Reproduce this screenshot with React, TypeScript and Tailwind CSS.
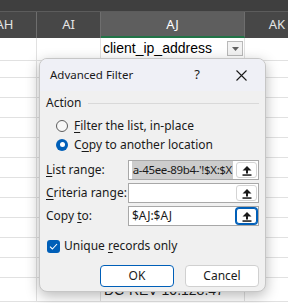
import React from 'react'

function Underlined({ text, at }: { text: string; at: number }) {
  return (
    <>
      {text.slice(0, at)}
      <span className="underline underline-offset-[2px]">{text[at]}</span>
      {text.slice(at + 1)}
    </>
  )
}

function CollapseButton({ focused }: { focused?: boolean }) {
  return (
    <div
      className={
        'flex h-[16px] w-[21px] shrink-0 items-center justify-center rounded-[3px] bg-white ' +
        (focused ? 'border border-[#005fb8] ring-1 ring-[#005fb8]' : 'border border-[#d4d4d4]')
      }
    >
      <svg width="10" height="11" viewBox="0 0 10 11">
        <path d="M5 1 L9.5 5.5 L6 5.5 L6 8.5 L4 8.5 L4 5.5 L0.5 5.5 Z" fill="#1a1a1a" />
        <rect x="0.5" y="9.3" width="9" height="1.5" fill="#1a1a1a" />
      </svg>
    </div>
  )
}

function RangeRow({
  label,
  at,
  value,
  selected,
  focused,
}: {
  label: string
  at: number
  value?: string
  selected?: boolean
  focused?: boolean
}) {
  return (
    <div className="flex h-[20px] items-center">
      <div className="w-[82px] shrink-0 text-[#1a1a1a]">
        <Underlined text={label} at={at} />
      </div>
      <div className="flex h-[20px] min-w-0 flex-1 items-center border border-[#a8a8a8] bg-white pl-[2px] pr-[1px]">
        <div
          className={
            'flex min-w-0 flex-1 overflow-hidden whitespace-nowrap pr-[3px] ' +
            (selected ? 'justify-end' : 'justify-start')
          }
        >
          {value && (
            <span
              className={
                selected
                  ? 'shrink-0 bg-[#cccccc] px-[1px] text-[11.5px] tracking-[-0.35px]'
                  : 'shrink-0 px-[1px]'
              }
            >
              {value}
            </span>
          )}
        </div>
        <CollapseButton focused={focused} />
      </div>
    </div>
  )
}

export default function App() {
  const rows = Array.from({ length: 12 })

  return (
    <div className="relative h-[303px] w-[288px] overflow-hidden bg-white font-['Noto_Sans',sans-serif]">
      <div className="h-[12px] border-b border-[#5c5c5c] bg-[#3f3f3f]" />

      <div className="-ml-[27px] grid h-[26px] grid-cols-[64px_64px_144px_64px] bg-[#474747] text-[13px] text-[#e4e4e4]">
        <div className="flex items-center justify-center border-r border-[#6e6e6e]">AH</div>
        <div className="flex items-center justify-center border-r border-[#6e6e6e]">AI</div>
        <div className="flex items-center justify-center border-b-2 border-r border-b-[#217346] border-r-[#6e6e6e] bg-[#5e5e5e] pt-[2px] text-white">
          AJ
        </div>
        <div className="flex items-center justify-center">AK</div>
      </div>

      <div className="-ml-[27px] grid h-[20px] grid-cols-[64px_64px_144px_64px]">
        <div className="border-b border-r border-[#e1e1e1]" />
        <div className="border-b border-r border-[#e1e1e1]" />
        <div className="flex items-center border-b-2 border-r border-b-[#217346] border-r-[#e1e1e1] pl-[2px] pr-[1px]">
          <span className="flex-1 font-['Liberation_Sans',sans-serif] text-[14px] text-black">client_ip_address</span>
          <div className="flex h-[15px] w-[16px] items-center justify-center border border-[#b9b9b9] bg-[#f3f3f3]">
            <svg width="7" height="4" viewBox="0 0 7 4">
              <path d="M0 0 L7 0 L3.5 4 Z" fill="#616161" />
            </svg>
          </div>
        </div>
        <div className="border-b border-[#e1e1e1]" />
      </div>

      {rows.map((_, i) => (
        <div key={i} className="-ml-[27px] grid h-[20px] grid-cols-[64px_64px_144px_64px]">
          <div className="border-b border-r border-[#e1e1e1]" />
          <div className="border-b border-r border-[#e1e1e1]" />
          <div className="flex items-center border-b border-r border-[#e1e1e1] pl-[3px] pt-[2px] font-['Liberation_Sans',sans-serif] text-[14px] text-[#222]">
            {i === 11 ? 'DC-REV-10.128.47' : ''}
          </div>
          <div className="border-b border-[#e1e1e1]" />
        </div>
      ))}

      <div className="absolute left-[39px] top-[58px] flex h-[234px] w-[227px] flex-col overflow-hidden rounded-[8px] border border-[#c6c6c6] bg-[#f0f0f0] text-[12px] text-[#1a1a1a] shadow-[0_4px_14px_rgba(0,0,0,0.28)]">
        <div className="flex h-[32px] items-center bg-[#eff0f6] pl-[10px]">
          <span className="flex-1 text-[11.5px]">Advanced Filter</span>
          <span className="mr-[10px] w-[20px] text-center text-[13px]">?</span>
          <span className="flex w-[48px] items-center justify-center">
            <svg width="11" height="11" viewBox="0 0 11 11">
              <path d="M0.5 0.5 L10.5 10.5 M10.5 0.5 L0.5 10.5" stroke="#1a1a1a" strokeWidth="1.1" />
            </svg>
          </span>
        </div>

        <div className="flex flex-col px-[6px]">
          <div className="mt-[4px] flex h-[16px] items-center gap-[6px]">
            <span>Action</span>
            <div className="h-px flex-1 bg-[#d9d9d9]" />
          </div>

          <div className="mt-[5px] flex h-[19px] items-center gap-[6px] pl-[10px]">
            <div className="h-[12px] w-[12px] rounded-full border border-[#5c5c5c] bg-[#f7f7f7]" />
            <span>
              <Underlined text="Filter the list, in-place" at={0} />
            </span>
          </div>
          <div className="flex h-[19px] items-center gap-[6px] pl-[10px]">
            <div className="flex h-[12px] w-[12px] items-center justify-center rounded-full bg-[#005fb8]">
              <div className="h-[5px] w-[5px] rounded-full bg-white" />
            </div>
            <span>
              <Underlined text="Copy to another location" at={1} />
            </span>
          </div>

          <div className="mt-[6px] flex flex-col gap-[3px]">
            <RangeRow label="List range:" at={0} value="a-45ee-89b4-'!$X:$X" selected />
            <RangeRow label="Criteria range:" at={0} />
            <RangeRow label="Copy to:" at={5} value="$AJ:$AJ" focused />
          </div>

          <div className="mt-[13px] flex h-[14px] items-center gap-[4px] pl-[1px]">
            <div className="flex h-[13px] w-[13px] items-center justify-center rounded-[3px] bg-[#005fb8]">
              <svg width="9" height="7" viewBox="0 0 9 7">
                <path d="M1 3.6 L3.4 6 L8 1" stroke="white" strokeWidth="1.1" fill="none" />
              </svg>
            </div>
            <span>
              <Underlined text="Unique records only" at={7} />
            </span>
          </div>

          <div className="mt-[12px] flex justify-end gap-[11px]">
            <button className="h-[22px] w-[74px] rounded-[4px] border border-[#005fb8] bg-white text-[12px] text-[#1a1a1a]">
              OK
            </button>
            <button className="h-[22px] w-[74px] rounded-[4px] border border-[#d0d0d0] bg-white text-[12px] text-[#1a1a1a]">
              Cancel
            </button>
          </div>
        </div>
      </div>
    </div>
  )
}
